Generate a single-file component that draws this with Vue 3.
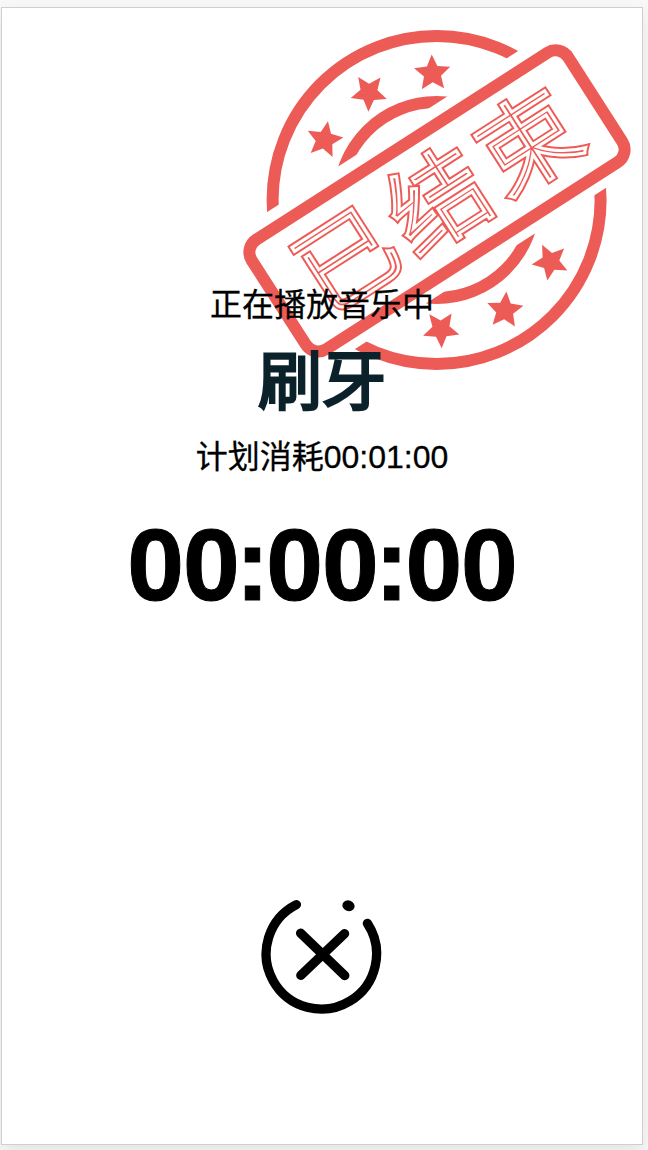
<script setup>
const starSpots = [
  { x: 324.5, y: 139.9, turn: 10.6 },
  { x: 368.9, y: 92.7, turn: 37.6 },
  { x: 432.4, y: 73.4, turn: -2.2 },
  { x: 441, y: 329.3, turn: 34 },
  { x: 504.9, y: 310.3, turn: 4.4 },
  { x: 550.5, y: 261.7, turn: 45.7 }
]

function starPoints({ x, y, turn }) {
  return Array.from({ length: 10 }, (_, i) => {
    const r = i % 2 ? 8.9 : 19
    const a = ((turn + i * 36) * Math.PI) / 180
    return `${(x + r * Math.sin(a)).toFixed(1)},${(y - r * Math.cos(a)).toFixed(1)}`
  }).join(' ')
}
</script>

<template>
  <div class="page">
    <main class="card">
      <svg class="stamp" viewBox="236 20 404 358" width="404" height="358">
        <defs>
          <clipPath id="ring-parts">
            <rect x="-250" y="-250" width="500" height="168.7" transform="translate(436.6 200) rotate(-32.7)" />
            <rect x="-250" y="81.3" width="500" height="168.7" transform="translate(436.6 200) rotate(-32.7)" />
          </clipPath>
        </defs>
        <g class="line" clip-path="url(#ring-parts)">
          <circle cx="436.6" cy="200" r="164" />
          <circle cx="436.6" cy="200" r="98" />
        </g>
        <polygon v-for="(s, i) in starSpots" :key="i" class="star" :points="starPoints(s)" />
        <g transform="translate(437 200.9) rotate(-32.7)">
          <rect class="line" x="-188" y="-65" width="376" height="130" rx="15" />
          <g class="word" transform="translate(0.5 36)">
            <text class="edge" x="-108 0 108">已结束</text>
            <text class="core" x="-108 0 108">已结束</text>
          </g>
        </g>
      </svg>

      <p class="status">正在播放音乐中</p>
      <h1 class="task">刷牙</h1>
      <p class="plan">计划消耗00:01:00</p>
      <div class="clock">00<span class="colon">:</span>00<span class="colon">:</span>00</div>

      <button class="close" aria-label="关闭">
        <svg viewBox="0 0 124 124" width="124" height="124">
          <path d="M36.4 12.6A55.2 55.2 0 1 0 107.4 31.4" />
          <path d="M40.6 41.2L84.8 83.6M84.6 41.6L40.8 83.4" />
          <ellipse cx="88.5" cy="13.7" rx="6.2" ry="5.3" transform="rotate(20 88.5 13.7)" />
        </svg>
      </button>
    </main>
  </div>
</template>

<style>
body {
  margin: 0;
  background: #f3f3f3;
}
</style>

<style scoped>
.page {
  box-sizing: border-box;
  width: 648px;
  height: 1150px;
  padding: 7px 5px 5px 1px;
  overflow: hidden;
  background: #f8f8f8;
}
.card {
  position: relative;
  box-sizing: border-box;
  width: 642px;
  height: 1138px;
  padding-top: 273px;
  border: 1px solid #cfcfcf;
  background: #fff;
  box-shadow: 0 8px 18px rgba(0, 0, 0, 0.08);
  display: flex;
  flex-direction: column;
  align-items: center;
  color: #000;
  font-family: "Liberation Sans", "Noto Sans CJK SC", sans-serif;
}
.stamp {
  position: absolute;
  left: 234px;
  top: 12px;
}
.line {
  fill: none;
  stroke: #ed5b56;
  stroke-width: 12;
}
.star {
  fill: #ed5b56;
}
.word {
  font-family: "Noto Sans CJK SC", sans-serif;
  font-size: 98px;
  font-weight: 300;
  text-anchor: middle;
  stroke-linejoin: miter;
}
.edge {
  fill: #ed5b56;
  stroke: #ed5b56;
  stroke-width: 7;
}
.core {
  fill: #ed5b56;
  stroke: #fff;
  stroke-width: 3;
}
.status,
.plan,
.task {
  position: relative;
  margin: 0;
  white-space: nowrap;
}
.status,
.plan {
  font-size: 32px;
  font-weight: 400;
  line-height: 48px;
  -webkit-text-stroke: 0.3px #000;
}
.task {
  margin-top: 9px;
  font-size: 64px;
  line-height: 88px;
  font-weight: 400;
  color: #0c222a;
  -webkit-text-stroke: 2.8px #0c222a;
}
.plan {
  margin-top: 7px;
}
.clock {
  margin-top: 34px;
  font-size: 102px;
  line-height: 100px;
  font-weight: 700;
  letter-spacing: -1.1px;
  -webkit-text-stroke: 1px #000;
}
.colon {
  margin: 0 -2.1px 0 -3px;
}
.close {
  margin: 277px 0 0;
  padding: 0;
  width: 124px;
  height: 124px;
  border: 0;
  background: none;
}
.close svg {
  display: block;
}
.close path {
  fill: none;
  stroke: #000;
  stroke-width: 9.3;
  stroke-linecap: round;
}
</style>
